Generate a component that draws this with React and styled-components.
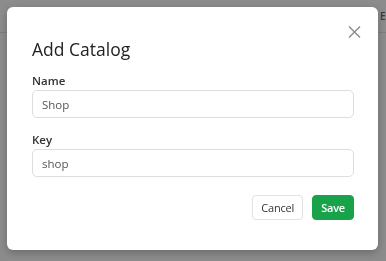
import React from 'react'
import styled, { createGlobalStyle } from 'styled-components'

const Global = createGlobalStyle`
  html, body {
    margin: 0;
    padding: 0;
    background: #ffffff;
    font-family: 'Open Sans', 'Noto Sans', sans-serif;
  }
  * { box-sizing: border-box; }
`;

const Page = styled.div`
  width: 386px;
  height: 261px;
  overflow: hidden;
  background: #fff;
`;

const TopBar = styled.div`
  height: 33px;
  border-bottom: 1px solid #e4e4e4;
  display: flex;
  align-items: center;
  padding-left: 380px;
  white-space: nowrap;
  font-size: 10px;
  font-weight: 600;
  color: #666;
  letter-spacing: 0.5px;
`;

const Overlay = styled.div`
  position: fixed;
  inset: 0;
  background: rgba(0, 0, 0, 0.45);
  padding: 7px 8px 11px 7px;
  display: flex;
  align-items: flex-start;
`;

const Modal = styled.div`
  position: relative;
  width: 371px;
  height: 243px;
  background: #fff;
  border-radius: 6px;
  box-shadow: 0 3px 10px rgba(0, 0, 0, 0.25);
  padding: 30px 24px 30px 25px;
  display: flex;
  flex-direction: column;
`;

const Close = styled.button`
  position: absolute;
  top: 12px;
  right: 11px;
  width: 26px;
  height: 26px;
  border: none;
  background: none;
  padding: 0;
  display: flex;
  align-items: center;
  justify-content: center;
  cursor: pointer;
`;

const Title = styled.h2`
  margin: 0 0 12px;
  font-size: 17.5px;
  line-height: 24px;
  font-weight: 400;
  color: #222;
`;

const Field = styled.div`
  display: flex;
  flex-direction: column;
  gap: 1px;
  margin-bottom: ${p => p.$last ? '18px' : '14px'};
`;

const Label = styled.label`
  font-size: 11.5px;
  line-height: 16px;
  font-weight: 600;
  color: #333;
`;

const Input = styled.input`
  height: 28px;
  width: 100%;
  border: 1px solid #dedede;
  border-radius: 5px;
  padding: 0 9px;
  font-family: inherit;
  font-size: 11.5px;
  color: #555;
  outline: none;
`;

const Footer = styled.div`
  display: flex;
  justify-content: flex-end;
  gap: 9px;
`;

const Button = styled.button`
  height: 25px;
  padding: 0 8px;
  border-radius: 4px;
  border: 1px solid ${p => p.$primary ? '#18a24a' : '#e2e2e2'};
  background: ${p => p.$primary ? '#18a24a' : '#fff'};
  color: ${p => p.$primary ? '#fff' : '#333'};
  font-family: inherit;
  font-size: 11px;
  letter-spacing: -0.2px;
  font-weight: ${p => p.$primary ? 600 : 400};
  cursor: pointer;
`;

export default function App() {
  return (
    <>
      <Global />
      <Page>
        <TopBar>EDIT</TopBar>
      </Page>
      <Overlay>
        <Modal>
          <Close aria-label="Close">
            <svg width="13" height="12" viewBox="0 0 13 12">
              <path d="M1 0.5 L12 11.5 M12 0.5 L1 11.5" stroke="#8a8a8a" strokeWidth="1.4" fill="none" />
            </svg>
          </Close>
          <Title>Add Catalog</Title>
          <Field>
            <Label>Name</Label>
            <Input defaultValue="Shop" />
          </Field>
          <Field $last>
            <Label>Key</Label>
            <Input defaultValue="shop" />
          </Field>
          <Footer>
            <Button>Cancel</Button>
            <Button $primary>Save</Button>
          </Footer>
        </Modal>
      </Overlay>
    </>
  );
}
